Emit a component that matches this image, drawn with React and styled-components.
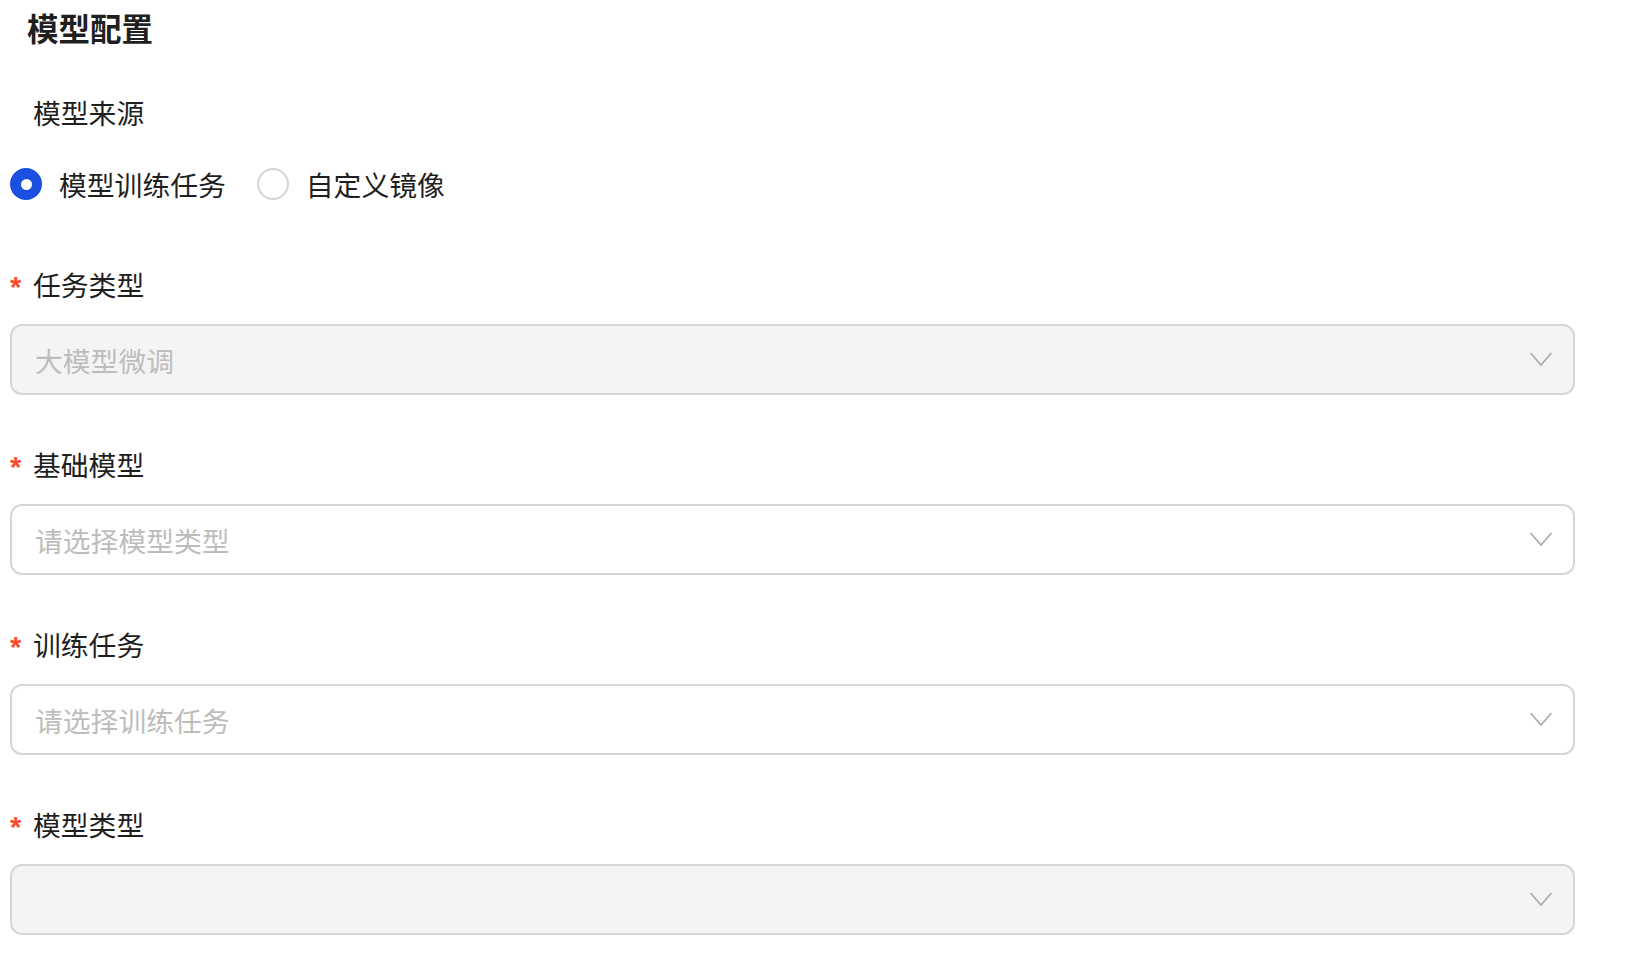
import React, { useState } from "react";
import styled, { createGlobalStyle } from "styled-components";

const GlobalStyle = createGlobalStyle`
  html, body { margin: 0; padding: 0; background: #ffffff; }
  body {
    font-family: "Noto Sans CJK SC", "Noto Sans", "Liberation Sans", sans-serif;
    color: #1f1f1f;
  }
  * { box-sizing: border-box; }
`;

const Page = styled.div`
  width: 1575px;
  display: flex;
  flex-direction: column;
  padding: 5px 0 0 10px;
`;

const Title = styled.h2`
  margin: 0 0 45px 17px;
  font-size: 31.5px;
  line-height: 44px;
  font-weight: 700;
  color: #1f1f1f;
`;

const Label = styled.div`
  display: flex;
  align-items: center;
  height: 40px;
  padding-bottom: 3px;
  font-size: 27.8px;
  line-height: 37px;
  color: #1f1f1f;
`;

const Marker = styled.span`
  width: 23px;
  flex: none;
  padding-top: 6px;
  color: #ff4a2f;
  font-size: 29px;
  font-weight: 700;
  font-family: "Liberation Sans", sans-serif;
  line-height: 37px;
`;

const RadioRow = styled.div`
  display: flex;
  align-items: center;
  gap: 31px;
  height: 40px;
  margin: 30px 0 62px;
`;

const RadioItem = styled.label`
  display: flex;
  align-items: center;
  gap: 17px;
  font-size: 27.8px;
  line-height: 40px;
  color: #1f1f1f;
  cursor: pointer;
`;

const RadioDot = styled.span`
  width: 32px;
  height: 32px;
  border-radius: 50%;
  flex: none;
  display: flex;
  align-items: center;
  justify-content: center;
  background: ${(p) => (p.$checked ? "#1a4fe0" : "#ffffff")};
  border: ${(p) => (p.$checked ? "none" : "2px solid #d4d4d4")};
  &::after {
    content: "";
    display: ${(p) => (p.$checked ? "block" : "none")};
    width: 11px;
    height: 11px;
    border-radius: 50%;
    background: #ffffff;
  }
`;

const Fields = styled.div`
  display: flex;
  flex-direction: column;
  gap: 51px;
`;

const Field = styled.div`
  display: flex;
  flex-direction: column;
  gap: 18px;
`;

const SelectBox = styled.div`
  height: 71px;
  width: 100%;
  border: 2px solid #d6d6d6;
  border-radius: 12px;
  background: ${(p) => (p.$disabled ? "#f4f4f4" : "#ffffff")};
  display: flex;
  align-items: center;
  padding: 0 21px 0 23px;
`;

const Placeholder = styled.span`
  flex: 1;
  font-size: 27.8px;
  color: #bdbdbd;
  line-height: 40px;
`;

const Chevron = () => (
  <svg width="22" height="15" viewBox="0 0 22 15" fill="none">
    <polyline
      points="1,1.5 11,13 21,1.5"
      stroke="#a8a8a8"
      strokeWidth="1.6"
      strokeLinejoin="miter"
      strokeLinecap="round"
    />
  </svg>
);

const fields = [
  { label: "任务类型", value: "大模型微调", disabled: true },
  { label: "基础模型", value: "请选择模型类型", disabled: false },
  { label: "训练任务", value: "请选择训练任务", disabled: false },
  { label: "模型类型", value: "", disabled: true },
];

export default function App() {
  const [source, setSource] = useState("train");
  return (
    <Page>
      <GlobalStyle />
      <Title>模型配置</Title>
      <Label>
        <Marker />
        模型来源
      </Label>
      <RadioRow>
        <RadioItem onClick={() => setSource("train")}>
          <RadioDot $checked={source === "train"} />
          模型训练任务
        </RadioItem>
        <RadioItem onClick={() => setSource("image")}>
          <RadioDot $checked={source === "image"} />
          自定义镜像
        </RadioItem>
      </RadioRow>
      <Fields>
        {fields.map((f) => (
          <Field key={f.label}>
            <Label>
              <Marker>*</Marker>
              {f.label}
            </Label>
            <SelectBox $disabled={f.disabled}>
              <Placeholder>{f.value}</Placeholder>
              <Chevron />
            </SelectBox>
          </Field>
        ))}
      </Fields>
    </Page>
  );
}
